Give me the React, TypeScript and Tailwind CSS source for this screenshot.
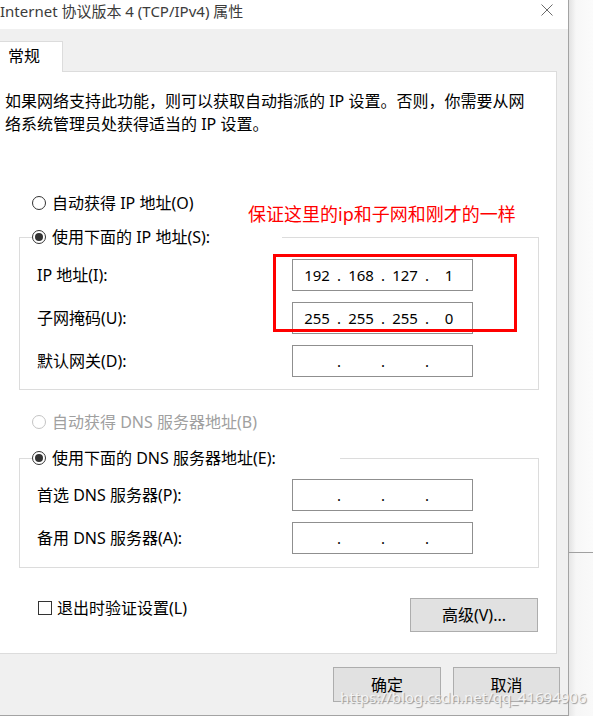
import React from "react";

function Radio({ checked = false, disabled = false }: { checked?: boolean; disabled?: boolean }) {
  return (
    <span
      className={
        disabled
          ? "flex h-[14px] w-[14px] shrink-0 items-center justify-center rounded-full border border-[#c4c4c4] bg-white"
          : "flex h-[14px] w-[14px] shrink-0 items-center justify-center rounded-full border border-[#333333] bg-white"
      }
    >
      {checked ? <span className="h-[8px] w-[8px] rounded-full bg-[#333333]" /> : null}
    </span>
  );
}

function IpField({ octets }: { octets?: string[] }) {
  const o = octets ?? ["", "", "", ""];
  return (
    <div className="flex h-[32px] w-[181px] items-center border border-[#8f8f8f] bg-white pl-[4px] text-[15px] leading-[20px] text-black">
      {o.map((v, i) => (
        <React.Fragment key={i}>
          {i > 0 ? <span className="flex w-[4px] justify-center">.</span> : null}
          <span className="w-[40px] text-center">{v}</span>
        </React.Fragment>
      ))}
    </div>
  );
}

function Row({ label, octets }: { label: string; octets?: string[] }) {
  return (
    <div className="flex h-[32px] items-center">
      <span className="w-[272px] whitespace-nowrap pl-[17px] text-[16px] leading-[22px]">{label}</span>
      <IpField octets={octets} />
    </div>
  );
}

function Button({ children, w }: { children: React.ReactNode; w: string }) {
  return (
    <div className={`flex items-center justify-center border border-[#adadad] bg-[#e1e1e1] text-[16px] leading-[22px] ${w}`}>
      {children}
    </div>
  );
}

export default function App() {
  return (
    <div className="relative flex h-[717px] w-[593px] flex-col overflow-hidden bg-white font-['Noto_Sans','Noto_Sans_CJK_SC',sans-serif] text-black">
      <div className="flex h-[716px]">
        {/* Dialog */}
        <div className="flex h-[716px] w-[569px] shrink-0 flex-col border-b border-r border-[#a3a3a3]">
          {/* Title bar */}
          <div className="flex h-[29px] shrink-0 items-start justify-between bg-white">
            <span className="whitespace-nowrap text-[15px] leading-[22px] text-[#3c3c3c]">
              Internet 协议版本 4 (TCP/IPv4) 属性
            </span>
            <svg className="mr-[15px] mt-[4px]" width="12" height="12" viewBox="0 0 12 12">
              <path d="M0.5 0.5 L11.5 11.5 M11.5 0.5 L0.5 11.5" stroke="#6b6b6b" strokeWidth="1" fill="none" />
            </svg>
          </div>

          {/* Body */}
          <div className="flex flex-1 flex-col bg-[#f0f0f0]">
            {/* Tab */}
            <div className="mt-[12px] flex">
              <div className="relative z-10 -mb-px flex h-[31px] w-[63px] items-start border-r border-t border-[#dcdcdc] bg-white pl-[8px] pt-[3px] text-[16px] leading-[22px]">
                常规
              </div>
            </div>

            {/* Panel */}
            <div className="relative h-[583px] w-[557px] shrink-0 border-y border-r border-[#dcdcdc] bg-white">
              <p className="whitespace-nowrap pl-[5px] pt-[18px] text-[16px] leading-[23px]">
                如果网络支持此功能，则可以获取自动指派的 IP 设置。否则，你需要从网
                <br />
                络系统管理员处获得适当的 IP 设置。
              </p>

              <div className="ml-[32px] mt-[56px] flex h-[22px] items-center gap-[6px] text-[16px] leading-[22px]">
                <Radio />
                <span className="whitespace-nowrap">自动获得 IP 地址(O)</span>
              </div>

              <fieldset className="ml-[19px] mt-[12px] w-[520px] border border-[#dcdcdc] pb-[12px]">
                <legend className="ml-[12px] h-[22px] w-[250px]">
                  <div className="flex h-[22px] items-center gap-[6px] text-[16px] leading-[22px]">
                    <Radio checked />
                    <span className="whitespace-nowrap">使用下面的 IP 地址(S):</span>
                  </div>
                </legend>
                <div className="flex flex-col gap-[11px] pt-[11px]">
                  <Row label="IP 地址(I):" octets={["192", "168", "127", "1"]} />
                  <Row label="子网掩码(U):" octets={["255", "255", "255", "0"]} />
                  <Row label="默认网关(D):" />
                </div>
              </fieldset>

              <div className="ml-[32px] mt-[21px] flex h-[22px] items-center gap-[6px] text-[16px] leading-[22px] text-[#a0a0a0]">
                <Radio disabled />
                <span className="whitespace-nowrap">自动获得 DNS 服务器地址(B)</span>
              </div>

              <fieldset className="ml-[19px] mt-[14px] w-[520px] border border-[#dcdcdc] pb-[13px]">
                <legend className="ml-[12px] h-[22px] w-[308px]">
                  <div className="flex h-[22px] items-center gap-[6px] text-[16px] leading-[22px]">
                    <Radio checked />
                    <span className="whitespace-nowrap">使用下面的 DNS 服务器地址(E):</span>
                  </div>
                </legend>
                <div className="flex flex-col gap-[11px] pt-[10px]">
                  <Row label="首选 DNS 服务器(P):" />
                  <Row label="备用 DNS 服务器(A):" />
                </div>
              </fieldset>

              <div className="ml-[38px] mt-[30px] flex w-[500px] items-start justify-between">
                <div className="flex h-[20px] items-center gap-[5px] text-[16px] leading-[22px]">
                  <span className="h-[14px] w-[14px] border border-[#333333] bg-white" />
                  <span className="whitespace-nowrap">退出时验证设置(L)</span>
                </div>
                <Button w="h-[34px] w-[128px]">高级(V)...</Button>
              </div>

              {/* Annotation overlays */}
              <span className="absolute left-[248px] top-[130px] whitespace-nowrap text-[18px] leading-[24px] text-[#ff0000]">
                保证这里的ip和子网和刚才的一样
              </span>
              <div className="absolute left-[273px] top-[182px] h-[78px] w-[244px] border-[3px] border-[#ff0000]" />
            </div>

            {/* Bottom buttons */}
            <div className="flex justify-end gap-[12px] pr-[8px] pt-[13px]">
              <Button w="h-[35px] w-[108px]">确定</Button>
              <Button w="h-[35px] w-[107px]">取消</Button>
            </div>
          </div>
        </div>

        {/* Outside area on the right */}
        <div className="flex flex-1 flex-col">
          <div className="h-[552px] bg-[linear-gradient(to_right,#e2e2e2,#f7f7f7_7px,#fbfbfb)]" />
          <div className="h-px bg-[#a0a0a0]" />
          <div className="flex-1 bg-[linear-gradient(to_right,#e6e6e6,#f6f6f6_7px,#f9f9f9)]" />
        </div>
      </div>
      <div className="h-px bg-white" />

      {/* Watermark */}
      <span className="absolute left-[340px] top-[687px] whitespace-nowrap text-[15px] leading-[20px] text-[#f4f4f4] [text-shadow:1px_1px_1px_#9a9a9a]">
        https://blog.csdn.net/qq_41694906
      </span>
    </div>
  );
}
